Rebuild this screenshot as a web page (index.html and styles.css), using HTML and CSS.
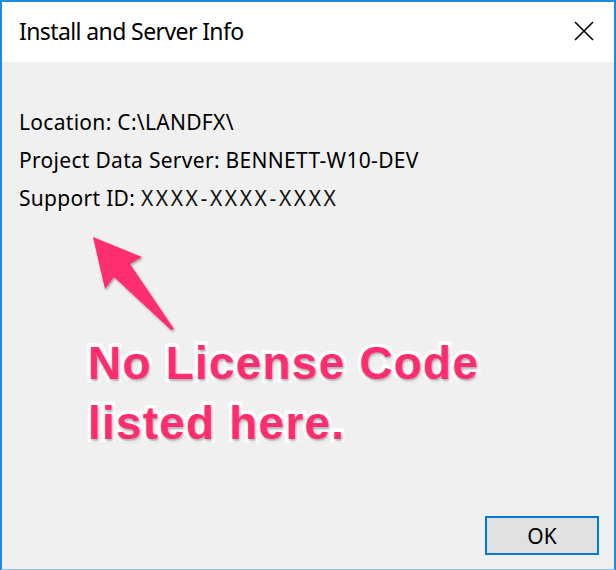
FILE: index.html
```html
<!DOCTYPE html>
<html>
<head>
<meta charset="utf-8">
<link rel="stylesheet" href="styles.css">
</head>
<body>
<div class="window">
  <div class="titlebar">
    <span class="title">Install and Server Info</span>
    <svg class="close" width="20" height="20" viewBox="0 0 20 20"><path d="M1 1 L19 19 M19 1 L1 19" stroke="#000" stroke-width="1.6" fill="none"/></svg>
  </div>
  <div class="content">
    <div class="info">
      <div class="line">Location: C:\LANDFX\</div>
      <div class="line">Project Data Server: BENNETT-W10-DEV</div>
      <div class="line">Support ID: <span class="sid">XXXX-XXXX-XXXX</span></div>
    </div>
    <div class="footer">
      <button class="ok">OK</button>
    </div>
    <svg class="arrow" width="120" height="120" viewBox="0 0 120 120">
      <defs>
        <filter id="sh" x="-20%" y="-20%" width="140%" height="140%">
          <feDropShadow dx="1" dy="1.5" stdDeviation="1.2" flood-color="#000" flood-opacity="0.35"/>
        </filter>
      </defs>
      <polygon points="11,15 60,35 48,42 92,107 89,108 32,55 23,67" fill="#ff2d6f" filter="url(#sh)"/>
    </svg>
    <div class="note">No License Code<br>listed here.</div>
  </div>
</div>
</body>
</html>
```
FILE: styles.css
```css
html, body {
  margin: 0;
  padding: 0;
  background: #f0f0f0;
}
.window {
  position: relative;
  width: 616px;
  height: 570px;
  box-sizing: border-box;
  border: 2px solid #1a8ae6;
  border-bottom: 1px solid #8cc4f0;
  display: flex;
  flex-direction: column;
  font-family: "Noto Sans", sans-serif;
  color: #000;
}
.titlebar {
  height: 60px;
  background: #fff;
  display: flex;
  align-items: center;
  justify-content: space-between;
  padding: 0 20px 0 17px;
  flex: none;
}
.title {
  font-size: 23px;
  letter-spacing: -0.6px;
  margin-top: -3px;
}
.close {
  display: block;
  margin-top: -2px;
}
.content {
  flex: 1;
  background: #f0f0f0;
  display: flex;
  flex-direction: column;
  position: relative;
}
.info {
  padding: 41px 0 0 17px;
}
.line {
  font-size: 21px;
  line-height: 38px;
  letter-spacing: 0.3px;
}
.sid {
  letter-spacing: 2.6px;
  color: #111;
}
.footer {
  margin-top: auto;
  display: flex;
  justify-content: flex-end;
  padding: 0 15px 14px 0;
}
.ok {
  width: 114px;
  height: 39px;
  box-sizing: border-box;
  border: 2px solid #0078d7;
  background: #e1e1e1;
  font-family: "Noto Sans", sans-serif;
  font-size: 21px;
  color: #000;
  padding: 0;
}
.arrow {
  position: absolute;
  left: 80px;
  top: 160px;
}
.note {
  position: absolute;
  left: 86px;
  top: 271px;
  font-family: "Liberation Sans", Arial, sans-serif;
  font-weight: bold;
  font-size: 46px;
  letter-spacing: 1.2px;
  line-height: 60px;
  color: #ff2d6f;
  -webkit-text-stroke: 7px #fff;
  paint-order: stroke fill;
  text-shadow: 1px 2px 3px rgba(0,0,0,0.35);
}
```
